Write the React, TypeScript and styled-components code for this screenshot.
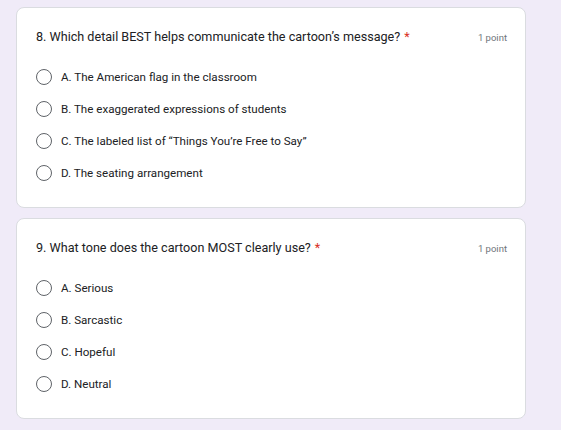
import React from "react";
import styled, { createGlobalStyle } from "styled-components";

const Global = createGlobalStyle`
  html, body { margin: 0; padding: 0; background: #f0ebf8; }
  body { font-family: Roboto, "Noto Sans", Arial, sans-serif; }
`;

const Page = styled.div`
  width: 561px;
  height: 430px;
  box-sizing: border-box;
  padding: 7px 0 0 16px;
  display: flex;
  flex-direction: column;
  gap: 10px;
  overflow: hidden;
`;

const Card = styled.div`
  width: 510px;
  box-sizing: border-box;
  background: #ffffff;
  border: 1px solid #dadce0;
  border-radius: 8px;
  padding: 21px 18px 18px 19px;
`;

const Header = styled.div`
  display: flex;
  align-items: center;
  justify-content: space-between;
  height: 16px;
`;

const Title = styled.div`
  font-size: 12.6px;
  line-height: 16px;
  color: #202124;
`;

const Star = styled.span`
  color: #d93025;
  margin-left: 4px;
`;

const Points = styled.div`
  font-size: 9.5px;
  color: #70757a;
`;

const Options = styled.div`
  display: flex;
  flex-direction: column;
  margin-top: 16px;
`;

const Option = styled.label`
  display: flex;
  align-items: center;
  height: 32px;
  gap: 9px;
`;

const Radio = styled.span`
  width: 16px;
  height: 16px;
  box-sizing: border-box;
  border: 1.5px solid #5f6368;
  border-radius: 50%;
  flex: none;
`;

const OptionText = styled.span`
  font-size: 11.6px;
  color: #202124;
`;

const questions = [
  {
    title: "8. Which detail BEST helps communicate the cartoon\u2019s message?",
    options: [
      "A. The American flag in the classroom",
      "B. The exaggerated expressions of students",
      "C. The labeled list of \u201CThings You\u2019re Free to Say\u201D",
      "D. The seating arrangement",
    ],
  },
  {
    title: "9. What tone does the cartoon MOST clearly use?",
    options: ["A. Serious", "B. Sarcastic", "C. Hopeful", "D. Neutral"],
  },
];

export default function App() {
  return (
    <>
      <Global />
      <Page>
        {questions.map((q) => (
          <Card key={q.title}>
            <Header>
              <Title>
                {q.title}
                <Star>*</Star>
              </Title>
              <Points>1 point</Points>
            </Header>
            <Options>
              {q.options.map((o) => (
                <Option key={o}>
                  <Radio />
                  <OptionText>{o}</OptionText>
                </Option>
              ))}
            </Options>
          </Card>
        ))}
      </Page>
    </>
  );
}
